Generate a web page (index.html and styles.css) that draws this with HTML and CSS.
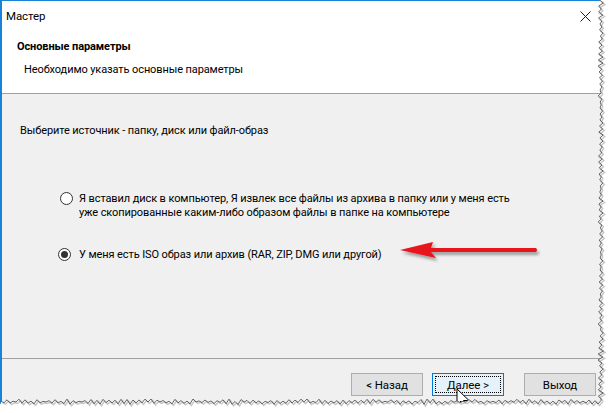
FILE: index.html
```html
<!DOCTYPE html>
<html lang="ru">
<head>
<meta charset="utf-8">
<title>Мастер</title>
<link rel="stylesheet" href="styles.css">
</head>
<body>
<div class="stage">
  <div class="window">
    <div class="titlebar">
      <span class="title">Мастер</span>
      <svg class="close" width="11" height="11" viewBox="0 0 11 11"><path d="M0.5 0.5 L10.5 10.5 M10.5 0.5 L0.5 10.5" stroke="#222" stroke-width="1" fill="none"/></svg>
    </div>
    <div class="header">
      <div class="h-title">Основные параметры</div>
      <div class="h-sub">Необходимо указать основные параметры</div>
    </div>
    <div class="body">
      <div class="prompt">Выберите источник - папку, диск или файл-образ</div>
      <div class="options">
        <label class="option opt1">
          <span class="radio"></span>
          <span class="otext">Я вставил диск в компьютер, Я извлек все файлы из архива в папку или у меня есть<br>уже скопированные каким-либо образом файлы в папке на компьютере</span>
        </label>
        <label class="option opt2">
          <span class="radio checked"></span>
          <span class="otext">У меня есть ISO образ или архив (RAR, ZIP, DMG или другой)</span>
        </label>
      </div>
    </div>
    <div class="footer">
      <button class="btn">&lt; Назад</button>
      <button class="btn primary"><span class="focus">Далее &gt;</span></button>
      <button class="btn exit">Выход</button>
    </div>
  </div>

  <svg class="arrow" width="150" height="26" viewBox="0 0 150 26">
    <defs>
      <filter id="sh" x="-10%" y="-50%" width="130%" height="200%">
        <feDropShadow dx="2" dy="3" stdDeviation="1.5" flood-color="#000" flood-opacity="0.35"/>
      </filter>
    </defs>
    <g filter="url(#sh)">
      <path d="M2 11 L35 3 L33 9 L138 9 Q140 11 138 13 L33 13 L38 19 Z" fill="#e8141b"/>
    </g>
  </svg>

  <svg class="cursor" width="14" height="22" viewBox="0 0 14 22">
    <path d="M1 1 L1 17 L5 13 L8 20 L10.5 19 L7.5 12.5 L13 12.5 Z" fill="#fff" stroke="#000" stroke-width="1" stroke-linejoin="round"/>
  </svg>

  <svg class="torn" id="torn" width="612" height="413" viewBox="0 0 612 413"></svg>
</div>
<script src="script.js"></script>
</body>
</html>
```

FILE: styles.css
```css
* { box-sizing: border-box; }
html, body { margin: 0; padding: 0; background: #fff; }
body {
  font-family: Roboto, "Noto Sans", "DejaVu Sans", sans-serif;
  font-size: 11px;
  letter-spacing: -0.1px;
  color: #000;
}
.stage {
  position: relative;
  width: 612px;
  height: 413px;
  overflow: hidden;
}
.window {
  width: 606px;
  height: 404px;
  border-top: 1px solid #1883d7;
  border-left: 2px solid #1883d7;
  display: flex;
  flex-direction: column;
  background: #f0f0f0;
}
.titlebar {
  height: 30px;
  background: #fff;
  display: flex;
  align-items: center;
  justify-content: space-between;
  padding: 0 15px 0 4px;
}
.title { font-size: 11.5px; }
.close { display: block; margin-top: 1px; }
.header {
  height: 63px;
  background: #fff;
  border-bottom: 1px solid #a0a0a0;
  padding: 8px 0 0 15px;
}
.h-title { font-weight: bold; line-height: 16px; }
.h-sub { margin: 7px 0 0 7px; line-height: 16px; }
.body {
  flex: 1;
  border-bottom: 1px solid #a0a0a0;
  padding: 29px 0 0 18px;
}
.prompt { line-height: 16px; }
.options { padding: 53px 0 0 40px; display: flex; flex-direction: column; gap: 28px; }
.option { display: flex; align-items: flex-start; gap: 6px; }
.otext { line-height: 14px; }
.radio {
  flex: none;
  width: 13px;
  height: 13px;
  border: 1px solid #333;
  border-radius: 50%;
  background: #fff;
  margin-top: 0;
  position: relative;
}
.radio.checked::after {
  content: "";
  position: absolute;
  left: 2px; top: 2px;
  width: 7px; height: 7px;
  border-radius: 50%;
  background: #333;
}
.opt2 .radio { margin-left: -2px; }
.opt2 .otext { margin-left: 2px; }
.footer {
  height: 45px;
  display: flex;
  justify-content: flex-end;
  align-items: flex-start;
  padding: 14px 10px 0 0;
}
.btn {
  font-family: inherit;
  font-size: 11.5px;
  letter-spacing: -0.1px;
  width: 72px;
  height: 23px;
  margin: 0 0 0 9px;
  padding: 0;
  border: 1px solid #adadad;
  background: #e1e1e1;
  color: #000;
}
.btn.exit { margin-left: 20px; }
.btn.primary {
  border: 1px solid #0078d7;
  background: #e5f1fb;
  padding: 2px;
}
.focus {
  display: flex;
  align-items: center;
  justify-content: center;
  width: 100%;
  height: 100%;
  border: 1px dotted #000;
}
.arrow { position: absolute; left: 398px; top: 239px; }
.cursor { position: absolute; left: 456px; top: 388px; }
.torn { position: absolute; left: 0; top: 0; }
```

FILE: script.js
```js
(function () {
  var svg = document.getElementById('torn');
  var seed = 11;
  function rnd() { seed = (seed * 9301 + 49297) % 233280; return seed / 233280; }
  var pts = [];
  var i = 0;
  for (var y = 0; y <= 399; y += 3, i++) {
    pts.push([598 + (i % 2 ? 3 : 0) + rnd() * 2.5, y]);
  }
  i = 0;
  for (var x = 601; x >= 0; x -= 3, i++) {
    pts.push([x, 399 + (i % 2 ? 3 : 0) + rnd() * 2.5]);
  }
  var line = pts.map(function (p) { return p[0].toFixed(1) + ',' + p[1].toFixed(1); }).join(' ');
  var fill = '612,0 ' + line + ' 0,413 612,413';
  var ns = 'http://www.w3.org/2000/svg';
  var poly = document.createElementNS(ns, 'polygon');
  poly.setAttribute('points', fill);
  poly.setAttribute('fill', '#fff');
  svg.appendChild(poly);
  var sh = document.createElementNS(ns, 'polyline');
  sh.setAttribute('points', pts.map(function (p) { return (p[0] + 1.5).toFixed(1) + ',' + (p[1] + 1.5).toFixed(1); }).join(' '));
  sh.setAttribute('fill', 'none');
  sh.setAttribute('stroke', '#c8c8c8');
  sh.setAttribute('stroke-width', '1.5');
  svg.appendChild(sh);
  var pl = document.createElementNS(ns, 'polyline');
  pl.setAttribute('points', line);
  pl.setAttribute('fill', 'none');
  pl.setAttribute('stroke', '#555');
  pl.setAttribute('stroke-width', '0.9');
  svg.appendChild(pl);
})();
```
